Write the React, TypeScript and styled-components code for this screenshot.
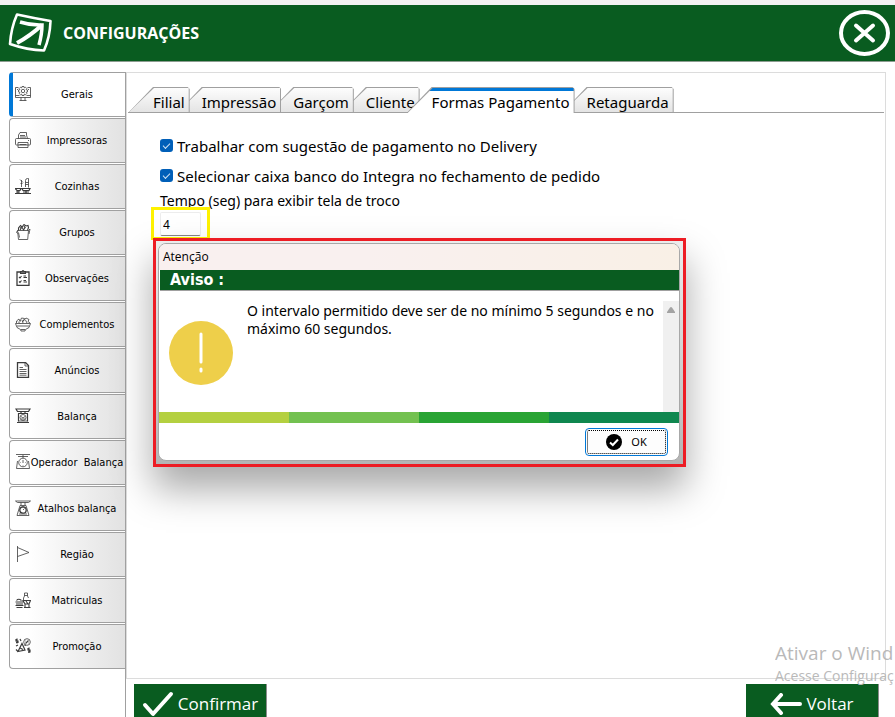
import React, { useState } from 'react';
import styled, { createGlobalStyle, css } from 'styled-components';

const ui = `'Noto Sans', 'DejaVu Sans Condensed', sans-serif`;
const compact = `'DejaVu Sans Condensed', 'Noto Sans', sans-serif`;
const segoe = `'Open Sans', 'Noto Sans', sans-serif`;
const green = '#095c20';
const line = '#a0a0a0';

const GlobalStyle = createGlobalStyle`
  * { box-sizing: border-box; }
  body { margin: 0; background: #fff; color: #000; font-family: 'Noto Sans', sans-serif; }
  button, input { font: inherit; color: inherit; margin: 0; }
`;

const Page = styled.div`
  position: relative;
  display: flex;
  flex-direction: column;
  height: 100vh;
  overflow: hidden;
  border-top: 5px solid #f2f2f2;
`;

const Header = styled.header`
  display: flex;
  align-items: center;
  flex: none;
  gap: 10px;
  height: 57px;
  padding: 0 5px 0 8px;
  background: ${green};
  border-bottom: 1px solid #8c9c90;
`;

const Title = styled.h1`
  flex: 1;
  margin: 0;
  color: #fff;
  font: 700 16px/24px ${segoe};
`;

const CloseButton = styled.button`
  display: flex;
  padding: 0;
  border: 0;
  background: none;
`;

const Body = styled.div`
  display: flex;
  flex: 1;
  min-height: 0;
  padding: 10px 9px 0;
`;

const Sidebar = styled.nav`
  display: flex;
  flex-direction: column;
  flex: none;
  gap: 1px;
  width: 117px;
  border-right: 1px solid ${line};
`;

const SideButton = styled.button<{ $active: boolean }>`
  display: flex;
  align-items: center;
  height: 45px;
  padding: 0 2px 0 5px;
  border: 1px solid ${line};
  border-right: 0;
  border-radius: 4px 0 0 4px;
  background: linear-gradient(90deg, #fff 15%, #e2e2e2);
  font: 11px/16px ${compact};
  ${(p) =>
    p.$active &&
    css`
      background: #fff;
      border-left: 4px solid #0078d7;
      padding-left: 2px;
    `}
  svg { flex: none; margin-top: -2px; }
`;

const SideLabel = styled.span`
  display: flex;
  flex: 1;
  justify-content: center;
  min-width: 0;
  padding-top: 1px;
  white-space: pre;
`;

const Main = styled.main`
  display: flex;
  flex: 1;
  flex-direction: column;
  gap: 5px;
  min-width: 0;
`;

const Panel = styled.section`
  position: relative;
  flex: 1;
  min-height: 0;
  border: 1px solid #dcdcdc;
  padding: 14px 1px 0;
`;

const Tabs = styled.div`
  display: flex;
  border-bottom: 1px solid ${line};
  height: 26px;
`;

const Tab = styled.button<{ $active: boolean; $order: number }>`
  position: relative;
  z-index: ${(p) => (p.$active ? 20 : p.$order)};
  height: 26px;
  padding: 3px 5px 0 25px;
  border: 0;
  background: ${line};
  clip-path: polygon(0 100%, 25px 0, calc(100% - 2px) 0, 100% 2px, 100% 100%);
  font: 15px/22px ${ui};
  white-space: nowrap;
  & + & { margin-left: -13px; }
  &::before {
    content: '';
    position: absolute;
    z-index: -1;
    inset: 1px 1px ${(p) => (p.$active ? '0' : '1px')} 1px;
    background: ${(p) =>
      p.$active ? 'linear-gradient(#0078d7 3px, #fff 3px)' : 'linear-gradient(#fdfdfd, #e4e4e4)'};
    clip-path: polygon(0 100%, 25px 0, 100% 0, 100% 100%);
  }
`;

const Form = styled.div`
  display: flex;
  flex-direction: column;
  align-items: flex-start;
  padding: 20px 32px 0;
  font: 15px/24px ${ui};
`;

const CheckRow = styled.label`
  display: flex;
  align-items: center;
  gap: 4px;
  height: 30px;
  padding-bottom: 5px;
`;

const Check = styled.input`
  appearance: none;
  width: 13px;
  height: 13px;
  border-radius: 3px;
  background: #005fb8;
  display: grid;
  place-items: center;
  &:checked::after {
    content: '';
    width: 6px;
    height: 3px;
    margin-bottom: 2px;
    border: solid #cfe2f3;
    border-width: 0 0 1px 1px;
    transform: rotate(-45deg);
  }
`;

const FieldLabel = styled.label`
  height: 14px;
  font: 14px/16px ${ui};
`;

const Highlight = styled.div`
  display: flex;
  width: 59px;
  height: 33px;
  margin-left: -9px;
  padding: 2px 5px 0 6px;
  border: 3px solid #fff200;
`;

const NumberInput = styled.input`
  width: 41px;
  height: 24px;
  padding: 0 2px;
  border: 1px solid #ececec;
  border-bottom-color: #868686;
  border-radius: 2px;
  background: #fff;
  font: 12px/16px ${ui};
  outline: none;
`;

const DialogFrame = styled.div`
  position: absolute;
  z-index: 30;
  top: 165px;
  left: 26px;
  width: 533px;
  max-width: 100%;
  padding: 2px 3px 3px 2px;
  border: 3px solid #ed1c24;
  background: linear-gradient(#ececec, #c8c8c8 70%, #b4b4b4);
  box-shadow: 0 22px 36px rgba(0, 0, 0, 0.34);
`;

const Dialog = styled.div`
  overflow: hidden;
  border: 1px solid #a8a8a8;
  border-radius: 8px;
  background: #fff;
`;

const DialogTitle = styled.div`
  height: 26px;
  padding: 0 4px;
  background: linear-gradient(90deg, #f9f0ef 40%, #f9f0e6);
  font: 12px/26px ${segoe};
`;

const DialogHeading = styled.h2`
  height: 21px;
  margin: 0 0 0 1px;
  padding-left: 10px;
  border-bottom: 1px solid ${line};
  background: ${green};
  color: #fff;
  font: 700 16px/20px ${compact};
`;

const DialogBody = styled.div`
  display: flex;
  height: 121px;
  padding: 10px 0 0 10px;
`;

const Warning = styled.svg`
  flex: none;
  margin-top: 20px;
`;

const Message = styled.p`
  flex: 1;
  margin: 0;
  padding: 1px 0 0 14px;
  font: 14px/18px ${ui};
`;

const ScrollTrack = styled.div`
  flex: none;
  width: 16px;
  padding: 6px 4px;
  background: #f0f0f0;
  svg { display: block; }
`;

const Stripes = styled.div`
  display: grid;
  grid-template-columns: repeat(4, 1fr);
  height: 11px;
`;

const Stripe = styled.span<{ $color: string }>`
  background: ${(p) => p.$color};
`;

const DialogFooter = styled.div`
  display: flex;
  justify-content: flex-end;
  padding: 5px 11px 4px;
`;

const OkButton = styled.button`
  display: flex;
  align-items: center;
  justify-content: center;
  gap: 9px;
  width: 83px;
  height: 28px;
  border: 1px solid #0078d7;
  border-radius: 4px;
  background: #fdfdfd;
  outline: 1px dotted #000;
  outline-offset: -3px;
  font: 11px/16px ${ui};
`;

const Footer = styled.footer`
  display: flex;
  flex: none;
  justify-content: space-between;
  height: 33px;
  padding: 0 7px 0 8px;
`;

const ActionButton = styled.button`
  display: flex;
  align-items: center;
  justify-content: center;
  gap: 4px;
  width: 133px;
  height: 40px;
  padding: 0;
  border: 0;
  border-right: 1px solid #8c8c8c;
  background: ${green};
  color: #fff;
  font: 17px/24px ${segoe};
`;

const Watermark = styled.div`
  position: absolute;
  z-index: 40;
  right: 0;
  bottom: 31px;
  width: 120px;
  overflow: hidden;
  color: #b9b9b9;
  white-space: nowrap;
  font: 14px/20px ${segoe};
  pointer-events: none;
`;

const WatermarkTitle = styled.div`
  font-size: 19px;
  line-height: 26px;
`;

const icons: Record<string, React.ReactNode> = {
  monitor: (
    <>
      <path d="M3.500 1.500h-3v10h15v-10h-3M.5 9.500h4M11.500 9.500h4M6 11.500v3M10 11.500v3M4.500 14.500h7M2 3.500h1M13 3.500h1" />
      <path d="M7 .5h2l.3 1.400 1.200-.7 1.300 1.300-.7 1.200 1.400.4v1.800l-1.400.4.7 1.200-1.300 1.300-1.200-.7L9 9.500H7l-.3-1.400-1.200.7-1.300-1.300.7-1.200-1.400-.4V4.100l1.400-.4-.7-1.200 1.300-1.300 1.200.7z" />
      <circle cx="8" cy="5" r="1.700" />
    </>
  ),
  printer: (
    <>
      <path d="M3.500 6.500V3l1.500-2.500h6.500V3l1 3.500M5 3.500h5M5 5h6" />
      <rect x=".5" y="6.500" width="15" height="6.500" rx="1" />
      <path d="M3 10.500h10v5H3zM4.500 12.500h7M13 8.500h1" />
    </>
  ),
  kitchen: (
    <>
      <path d="M10.500 9V2.500q0-2 2-2h1v9M10.500 4.500h3M10.500 6.500h3M6.500 2v7M5 1.500l3 3M5.500 5.500h2" />
      <path d="M0 10.500h6l-1 2H2zM7 10.500h8l-1 2H8zM0 15.500h16M1 14h4M8 14h6M3 12.500v3M11 12.500v3" strokeWidth="1.200" />
    </>
  ),
  bag: (
    <>
      <path d="M2.500 6.500h11l-.8 9H3.500zM3.500 8.500l1 5M2.500 6.500l-1 2 1 1M13.500 6.500l1.500-1.500-1 5" />
      <path d="M3.500 6.500V4l2-2.500L7 3l2-2.500L11 2l2-.5.5 2-1 3M5 6l2-3 1.500 3L10.500 3M5 3.500l1 1M9 2l1 2" strokeWidth="1.100" />
    </>
  ),
  clipboard: (
    <>
      <path d="M2 2h12v13.500H2z" strokeWidth="1.300" />
      <path d="M5.500 3.500v-2h1.500l1-1 1 1h1.500v2zM4 7l1 1 1.500-2M4 11.500l1 1 1.500-2M8.500 7.500H12M8.500 12H12M8.500 6H11M8.500 10.500H11" strokeWidth="1.100" />
    </>
  ),
  bowl: (
    <>
      <path d="M.5 7.500h15q-.5 5-5 6l-.5 1.500H6l-.5-1.500q-4.500-1-5-6zM2 10h12M6 13.500h4" />
      <path d="M1.500 7V5L4 3l1 2.500L6.500 2l3 .5L8 5.500 11 2l3 1.500-1 2 2 1.500M3 5.500l2 2M7 4l1 3M10.500 4l1.500 3" />
    </>
  ),
  document: (
    <>
      <path d="M2.500.5h8l3 3v12h-11z" strokeWidth="1.300" />
      <path d="M10 1v3h3.500M4.500 5.500H8M4.500 7.500h7M4.500 9.500h7M4.500 11.500h7M4.500 13.200h7" />
    </>
  ),
  scale: (
    <>
      <path d="M1 1h14l-1.500 2.500h-11zM6 3.500V5M10 3.500V5M3 5.500h10M3.500 5.500v8M12.500 5.500v8M2 14.500h12" strokeWidth="1.200" />
      <circle cx="8" cy="9.500" r="3" />
      <path d="M6 8.500l2 1.500 2-1.500M6 11h4M3.500 13h9" />
    </>
  ),
  dial: (
    <>
      <path d="M1 .5h14M3 2.500h10M8 1v3M2.500 7l-1 7.500h13l-1-7.500" />
      <circle cx="8" cy="8.500" r="4.300" />
      <path d="M8 6v3M5.500 8.500h.5M10 8.500h.5M8 11v.500" />
    </>
  ),
  dialSmall: (
    <>
      <path d="M.5 1h15l-2 1.500h-11zM6 2.500V5M10 2.500V5M5 5.500h6l3 10H2z" />
      <circle cx="8" cy="10" r="3.200" strokeWidth="1.300" />
      <path d="M8 10l1.500-1.500M4 14h8M7 7h2" />
    </>
  ),
  flag: <path d="M2.500 0v16M2.500 1.500l11.500 5-11.500 4" />,
  food: (
    <>
      <path d="M9.500 1h3v3l1 2M9.500 1v3L8.500 6v2M9.500 3.500h3" />
      <path d="M1.500 8.500q2-2.500 5 0M.5 10h8M1 12h7M.5 13.500h8M1.500 15.500h6M8 8.500h7.500l-1.500 3.500h-4zM10 12v3.500M14 12v3.500M9 15.500h6.500M11 9l2 3" strokeWidth="1.100" />
    </>
  ),
  promo: (
    <>
      <path d="M3 13.500l4-8 3 6.500zM5 10l3 1.500M1 11.500l2 2M9.500 7.500l1.500-.5" strokeWidth="1.200" />
      <circle cx="12" cy="4" r="3.300" />
      <path d="M10.500 5.500l3-3M10.500 3h.5M13 5h.5M2.500 1.500H1v1.500h2v1.500H1M2 .5v5M14.500 10.500H13V12h2v2h-2M14 9.500V15M5 1l1 2M1 8l2-1" strokeWidth="1.200" />
    </>
  ),
};

const SideIcon = ({ name }: { name: string }) => (
  <svg width="16" height="16" viewBox="0 0 16 16" fill="none" stroke="#3c3c3c" strokeWidth="0.800" aria-hidden="true">
    {icons[name]}
  </svg>
);

const sections: [string, string][] = [
  ['Gerais', 'monitor'],
  ['Impressoras', 'printer'],
  ['Cozinhas', 'kitchen'],
  ['Grupos', 'bag'],
  ['Observações', 'clipboard'],
  ['Complementos', 'bowl'],
  ['Anúncios', 'document'],
  ['Balança', 'scale'],
  ['Operador  Balança', 'dial'],
  ['Atalhos balança', 'dialSmall'],
  ['Região', 'flag'],
  ['Matriculas', 'food'],
  ['Promoção', 'promo'],
];

const tabs = ['Filial', 'Impressão', 'Garçom', 'Cliente', 'Formas Pagamento', 'Retaguarda'];
const stripes = ['#b4d040', '#73c150', '#29a434', '#0f874f'];

export default function App() {
  const [section, setSection] = useState('Gerais');
  const [tab, setTab] = useState('Formas Pagamento');
  const [open, setOpen] = useState(true);

  return (
    <>
      <GlobalStyle />
      <Page>
        <Header>
          <svg width="45" height="42" viewBox="0 0 45 42" fill="none" stroke="#fff" aria-hidden="true">
            <path d="M9 2.500Q25 6 42.500 9Q42 25 36 38.500Q19 38 2 32Q3 16 9 2.500Z" strokeWidth="2.600" strokeLinejoin="round" />
            <path d="M12 10Q23 13.500 34 13Q34 22 31 33" strokeWidth="3.500" />
            <path d="M9 31Q22 24 34 13" strokeWidth="4" />
          </svg>
          <Title>CONFIGURAÇÕES</Title>
          <CloseButton aria-label="Fechar">
            <svg width="51" height="46" viewBox="0 0 51 46" fill="none" stroke="#fff" strokeLinecap="round">
              <ellipse cx="25.500" cy="23" rx="23.500" ry="21" strokeWidth="4" />
              <path d="M17 15.500l17 15M34 15.500l-17 15" strokeWidth="4" />
            </svg>
          </CloseButton>
        </Header>
        <Body>
          <Sidebar>
            {sections.map(([label, icon]) => (
              <SideButton key={label} $active={label === section} onClick={() => setSection(label)}>
                <SideIcon name={icon} />
                <SideLabel>{label}</SideLabel>
              </SideButton>
            ))}
          </Sidebar>
          <Main>
            <Panel>
              <Tabs role="tablist">
                {tabs.map((label, i) => (
                  <Tab
                    key={label}
                    role="tab"
                    aria-selected={label === tab}
                    $active={label === tab}
                    $order={tabs.length - i}
                    onClick={() => setTab(label)}
                  >
                    {label}
                  </Tab>
                ))}
              </Tabs>
              <Form>
                <CheckRow>
                  <Check type="checkbox" defaultChecked />
                  Trabalhar com sugestão de pagamento no Delivery
                </CheckRow>
                <CheckRow>
                  <Check type="checkbox" defaultChecked />
                  Selecionar caixa banco do Integra no fechamento de pedido
                </CheckRow>
                <FieldLabel htmlFor="tempo">Tempo (seg) para exibir tela de troco</FieldLabel>
                <Highlight>
                  <NumberInput id="tempo" type="text" inputMode="numeric" defaultValue="4" />
                </Highlight>
              </Form>
              {open && (
                <DialogFrame>
                  <Dialog role="alertdialog" aria-labelledby="aviso" aria-describedby="mensagem">
                    <DialogTitle>Atenção</DialogTitle>
                    <DialogHeading id="aviso">Aviso :</DialogHeading>
                    <DialogBody>
                      <Warning width="64" height="64" viewBox="0 0 64 64" aria-hidden="true">
                        <circle cx="32" cy="32" r="32" fill="#eecf4a" />
                        <path d="M32 13v28M32 48v2" stroke="#fff" strokeWidth="3" strokeLinecap="round" />
                      </Warning>
                      <Message id="mensagem">
                        O intervalo permitido deve ser de no mínimo 5 segundos e no máximo 60 segundos.
                      </Message>
                      <ScrollTrack>
                        <svg width="8" height="6" viewBox="0 0 8 6" aria-hidden="true">
                          <path d="M3 .5Q4-.5 5 .5L8 5V6H0V5Z" fill="#a3a3a3" />
                        </svg>
                      </ScrollTrack>
                    </DialogBody>
                    <Stripes>
                      {stripes.map((c) => (
                        <Stripe key={c} $color={c} />
                      ))}
                    </Stripes>
                    <DialogFooter>
                      <OkButton onClick={() => setOpen(false)}>
                        <svg width="16" height="16" viewBox="0 0 16 16" fill="none" aria-hidden="true">
                          <circle cx="8" cy="8" r="8" fill="#000" />
                          <path d="M4 8.500l2.800 2.500L12 5.500" stroke="#fff" strokeWidth="2" />
                        </svg>
                        OK
                      </OkButton>
                    </DialogFooter>
                  </Dialog>
                </DialogFrame>
              )}
            </Panel>
            <Footer>
              <ActionButton>
                <svg width="32" height="26" viewBox="0 0 32 26" fill="none" stroke="#fff" strokeWidth="4" strokeLinecap="round" strokeLinejoin="round" aria-hidden="true">
                  <path d="M3 14l8 9L29 3" />
                </svg>
                Confirmar
              </ActionButton>
              <ActionButton>
                <svg width="32" height="22" viewBox="0 0 32 22" fill="none" stroke="#fff" strokeWidth="4" strokeLinecap="round" aria-hidden="true">
                  <path d="M3 11h27M11 2l-8 9 8 9" />
                </svg>
                Voltar
              </ActionButton>
            </Footer>
          </Main>
        </Body>
        <Watermark>
          <WatermarkTitle>Ativar o Wind</WatermarkTitle>
          Acesse Configuraç
        </Watermark>
      </Page>
    </>
  );
}
